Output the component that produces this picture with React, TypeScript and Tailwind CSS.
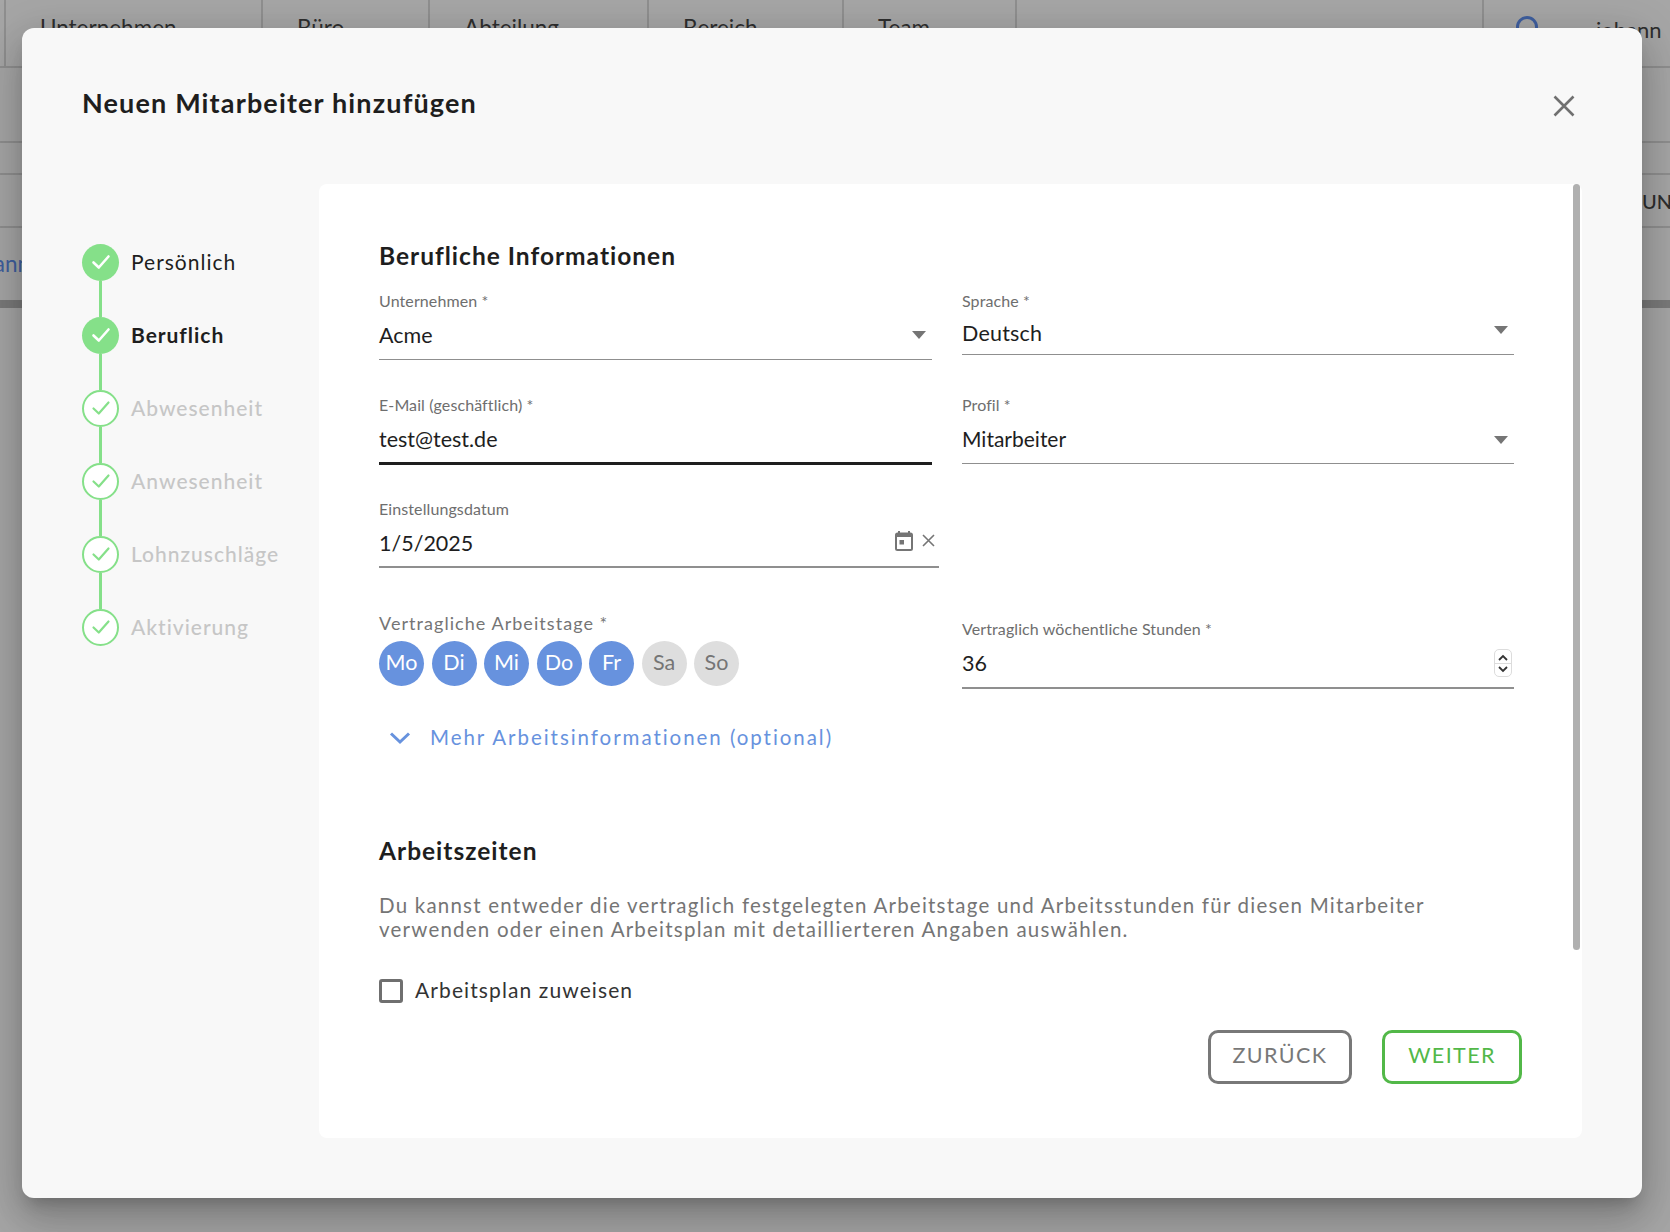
const FONT = "font-['Lato','Noto_Sans',sans-serif]";

function Check({ color, thick }: { color: string; thick?: boolean }) {
  return (
    <svg width="22" height="22" viewBox="0 0 22 22" fill="none" className="-mt-[1px]">
      <path d="M3.5 11.5 L8.8 16.5 L18.5 5.5" stroke={color} strokeWidth={thick ? "2.6" : "2.2"} strokeLinecap="round" strokeLinejoin="round" />
    </svg>
  );
}

function Step({ label, state, last }: { label: string; state: "done" | "active" | "todo"; last?: boolean }) {
  const filled = state !== "todo";
  return (
    <div className="flex gap-[12px]">
      <div className="flex w-[37px] flex-col items-center">
        <div
          className={
            filled
              ? "flex h-[37px] w-[37px] items-center justify-center rounded-full bg-[#85e089]"
              : "flex h-[37px] w-[37px] items-center justify-center rounded-full border-[2px] border-[#85e089] bg-white"
          }
        >
          <Check color={filled ? "#ffffff" : "#85e089"} thick={filled} />
        </div>
        {!last && <div className="h-[36px] w-[3px] bg-[#85e089]" />}
      </div>
      <div
        className={
          state === "active"
            ? "flex h-[35px] items-center text-[21px] font-bold tracking-[0.95px] text-[#1e1e1e]"
            : state === "done"
              ? "flex h-[35px] items-center text-[21px] tracking-[1px] text-[#1e1e1e]"
              : "flex h-[35px] items-center text-[21px] font-medium tracking-[1px] text-[#c6c6c6]"
        }
      >
        {label}
      </div>
    </div>
  );
}

function Arrow() {
  return (
    <svg width="14" height="8" viewBox="0 0 14 8">
      <path d="M0 0 H14 L7 8 Z" fill="#757575" />
    </svg>
  );
}

function Label({ children }: { children: React.ReactNode }) {
  return <div className="h-[20px] text-[16px] leading-[20px] tracking-[0.1px] text-[#6e6e6e]">{children}</div>;
}

function Day({ t, on }: { t: string; on?: boolean }) {
  return (
    <div
      className={
        on
          ? "flex h-[45px] w-[45px] items-center justify-center rounded-full bg-[#6792de] pb-[3px] text-[21.5px] text-white"
          : "flex h-[45px] w-[45px] items-center justify-center rounded-full bg-[#dedede] pb-[3px] text-[21.5px] text-[#757575]"
      }
    >
      {t}
    </div>
  );
}

function HeadCell({ t, w }: { t: string; w: string }) {
  return (
    <div className={`flex h-full items-center justify-between border-r-2 border-[#8f8f8f] pr-[31px] pl-[34px] pb-[10px] ${w}`}>
      <span className="text-[22.5px] text-[#2e2e2e]">{t}</span>
      <span className="mt-[4px] h-[2px] w-[15px] bg-[#555555]" />
    </div>
  );
}

export default function App() {
  return (
    <div className={`${FONT} relative h-[1232px] w-[1670px] overflow-hidden bg-[#a6a6a6]`}>
      {/* page behind the dialog */}
      <div className="flex h-[68px] items-center border-b-2 border-[#8f8f8f]">
        <div className="h-full w-[6px] border-r-2 border-[#8f8f8f]" />
        <HeadCell t="Unternehmen" w="w-[257px]" />
        <HeadCell t="Büro" w="w-[167px]" />
        <HeadCell t="Abteilung" w="w-[219px]" />
        <HeadCell t="Bereich" w="w-[195px]" />
        <HeadCell t="Team" w="w-[173px]" />
        <div className="h-full w-[467px] border-r-2 border-[#8f8f8f]" />
        <div className="mt-[16px] ml-[32px] h-[30px] w-[22px] self-start rounded-full border-[3px] border-[#3f5f9f]" />
        <span className="ml-[58px] pb-[8px] text-[22px] text-[#2e2e2e]">johann</span>
      </div>
      <div className="h-[75px] border-b-2 border-[#8f8f8f]" />
      <div className="h-[32px] border-b-2 border-[#8f8f8f]" />
      <div className="flex h-[53px] items-center justify-end border-b-2 border-[#8f8f8f] text-[20px] text-[#2e2e2e]">
        <span className="w-[28px] overflow-hidden whitespace-nowrap font-medium">UNG</span>
      </div>
      <div className="flex h-[72px] items-center text-[22.5px] text-[#3f5f9f]">
        <span className="-ml-[23px] whitespace-nowrap">Hann</span>
      </div>
      <div className="h-[8px] bg-[#7a7a7a]" />

      {/* dialog */}
      <div className="absolute top-[28px] left-[22px] flex h-[1170px] w-[1620px] flex-col rounded-[12px] bg-[#f8f8f8] shadow-[0_11px_15px_-7px_rgba(0,0,0,0.2),0_24px_38px_3px_rgba(0,0,0,0.14),0_9px_46px_8px_rgba(0,0,0,0.12)]">
        <div className="flex h-[156px] shrink-0 items-start justify-between pt-[56px] pr-[67px] pl-[60px]">
          <h1 className="text-[27px] leading-[38px] font-bold tracking-[1.15px] text-[#1e1e1e]">Neuen Mitarbeiter hinzufügen</h1>
          <svg width="22" height="22" viewBox="0 0 22 22" className="mt-[11px]">
            <path d="M1.5 1.5 L20.5 20.5 M20.5 1.5 L1.5 20.5" stroke="#707070" strokeWidth="2.6" />
          </svg>
        </div>
        <div className="flex flex-1 pl-[60px]">
          <aside className="flex w-[237px] shrink-0 flex-col pt-[60px]">
            <Step label="Persönlich" state="done" />
            <Step label="Beruflich" state="active" />
            <Step label="Abwesenheit" state="todo" />
            <Step label="Anwesenheit" state="todo" />
            <Step label="Lohnzuschläge" state="todo" />
            <Step label="Aktivierung" state="todo" last />
          </aside>
          <section className="relative flex h-[954px] w-[1263px] flex-col rounded-[8px] bg-white pt-[56px] pr-[68px] pl-[60px]">
            <div className="absolute top-0 right-[2px] h-[766px] w-[7px] rounded-full bg-[#b0b0b0]" />
            <h2 className="h-[32px] text-[24.5px] leading-[32px] font-bold tracking-[1px] text-[#1e1e1e]">Berufliche Informationen</h2>

            <div className="mt-[19px] grid grid-cols-[553px_552px] gap-x-[30px]">
              <div>
                <Label>Unternehmen *</Label>
                <div className="flex h-[49px] items-center justify-between border-b-[1.5px] border-[#8f8f8f] pr-[6px] text-[21.5px] text-[#1e1e1e]">
                  <span>Acme</span>
                  <Arrow />
                </div>
              </div>
              <div>
                <Label>Sprache *</Label>
                <div className="flex h-[44px] items-center justify-between border-b-[1.5px] border-[#8f8f8f] pr-[6px] text-[21.5px] text-[#1e1e1e]">
                  <span className="mt-[1px] tracking-[0.2px]">Deutsch</span>
                  <span className="mb-[6px] flex"><Arrow /></span>
                </div>
              </div>
            </div>

            <div className="mt-[35px] grid grid-cols-[553px_552px] gap-x-[30px]">
              <div>
                <Label>E-Mail (geschäftlich) *</Label>
                <div className="flex h-[50px] items-center border-b-[3px] border-[#1e1e1e] text-[21.5px] text-[#1e1e1e]">
                  <span className="mt-[1px]">test@test.de</span>
                </div>
              </div>
              <div>
                <Label>Profil *</Label>
                <div className="flex h-[49px] items-center justify-between border-b-[1.5px] border-[#8f8f8f] pr-[6px] text-[21px] text-[#1e1e1e]">
                  <span>Mitarbeiter</span>
                  <span className="mt-[1px] flex"><Arrow /></span>
                </div>
              </div>
            </div>

            <div className="mt-[34px] w-[560px]">
              <Label>Einstellungsdatum</Label>
              <div className="flex h-[49px] items-center justify-between border-b-2 border-[#8f8f8f] pr-[3px] text-[21.5px] text-[#1e1e1e]">
                <span className="mt-[1px]">1/5/2025</span>
                <div className="mb-[4px] flex items-center gap-[9px]">
                  <svg width="18" height="20" viewBox="0 0 18 20">
                    <path d="M4 0 V3 M14 0 V3" stroke="#757575" strokeWidth="2" />
                    <rect x="1" y="2.5" width="16" height="16.5" rx="1.5" fill="none" stroke="#757575" strokeWidth="2" />
                    <rect x="1" y="2.5" width="16" height="3.5" fill="#757575" />
                    <rect x="4.5" y="9" width="4.5" height="4.5" fill="#757575" />
                  </svg>
                  <svg width="13" height="13" viewBox="0 0 13 13" className="mr-[1px]">
                    <path d="M1 1 L12 12 M12 1 L1 12" stroke="#757575" strokeWidth="1.6" />
                  </svg>
                </div>
              </div>
            </div>

            <div className="mt-[45px] grid grid-cols-[553px_552px] gap-x-[30px]">
              <div>
                <div className="h-[20px] text-[18px] leading-[20px] tracking-[1.05px] text-[#757575]">Vertragliche Arbeitstage *</div>
                <div className="mt-[8px] flex gap-[7.5px]">
                  <Day t="Mo" on />
                  <Day t="Di" on />
                  <Day t="Mi" on />
                  <Day t="Do" on />
                  <Day t="Fr" on />
                  <Day t="Sa" />
                  <Day t="So" />
                </div>
              </div>
              <div className="pt-[6px]">
                <Label>Vertraglich wöchentliche Stunden *</Label>
                <div className="flex h-[50px] items-center justify-between border-b-2 border-[#8f8f8f] pr-[2px] text-[21.5px] text-[#1e1e1e]">
                  <span>36</span>
                  <div className="flex h-[28px] w-[18px] flex-col items-center justify-center gap-[2px] rounded-[5px] border border-[#dcdcdc]">
                    <svg width="10" height="7" viewBox="0 0 10 7"><path d="M1 6 L5 2 L9 6" fill="none" stroke="#333333" strokeWidth="1.8" /></svg>
                    <div className="h-px w-full bg-[#dcdcdc]" />
                    <svg width="10" height="7" viewBox="0 0 10 7"><path d="M1 1 L5 5 L9 1" fill="none" stroke="#333333" strokeWidth="1.8" /></svg>
                  </div>
                </div>
              </div>
            </div>

            <div className="mt-[32px] flex h-[32px] items-center pl-[10px]">
              <svg width="22" height="14" viewBox="0 0 22 14" className="mt-[2px]">
                <path d="M2 2.5 L11 11 L20 2.5" fill="none" stroke="#6792de" strokeWidth="3" />
              </svg>
              <span className="ml-[19px] text-[20.5px] tracking-[1.95px] text-[#6792de]">Mehr Arbeitsinformationen (optional)</span>
            </div>

            <h2 className="mt-[82px] h-[32px] text-[24.5px] leading-[32px] font-bold tracking-[1px] text-[#1e1e1e]">Arbeitszeiten</h2>
            <p className="mt-[26px] text-[20.5px] leading-[24px] tracking-[1.22px] text-[#757575]">
              Du kannst entweder die vertraglich festgelegten Arbeitstage und Arbeitsstunden für diesen Mitarbeiter
              <br />
              verwenden oder einen Arbeitsplan mit detaillierteren Angaben auswählen.
            </p>
            <div className="mt-[33px] flex items-center gap-[12px]">
              <div className="h-[24px] w-[24px] rounded-[3px] border-[3px] border-[#6f6f6f]" />
              <span className="mb-[2px] text-[21px] tracking-[1.1px] text-[#333333]">Arbeitsplan zuweisen</span>
            </div>
            <div className="mt-[22px] mr-[-8px] flex justify-end gap-[30px]">
              <button className="h-[54px] w-[144px] rounded-[10px] border-[3px] border-[#787878] pb-[2px] text-[21.5px] tracking-[1.4px] text-[#787878]">ZURÜCK</button>
              <button className="h-[54px] w-[140px] rounded-[10px] border-[3px] border-[#52b848] pb-[2px] text-[21.5px] tracking-[1.4px] text-[#52b848]">WEITER</button>
            </div>
          </section>
        </div>
      </div>
    </div>
  );
}
